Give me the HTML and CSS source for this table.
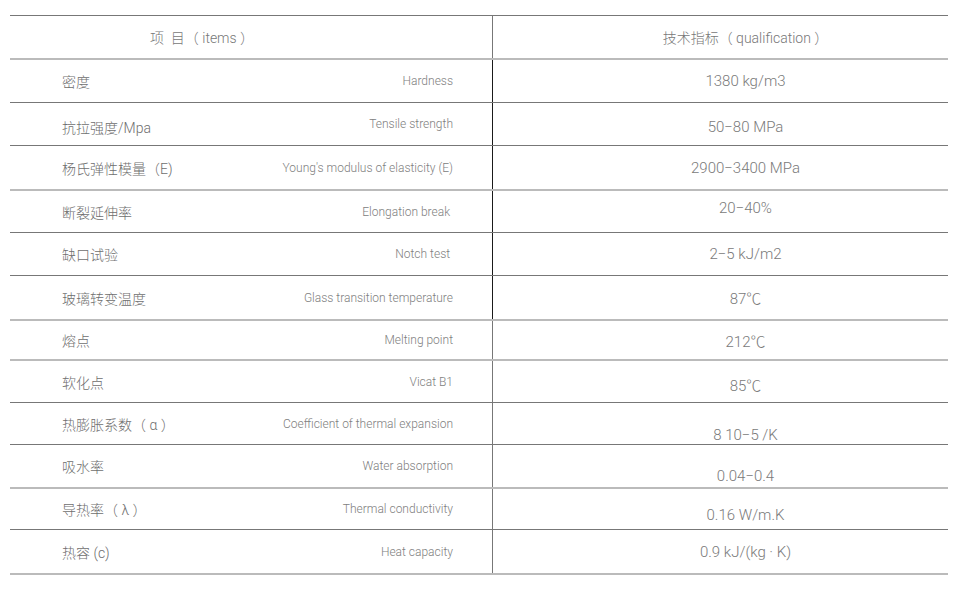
FILE: index.html
```html
<!DOCTYPE html>
<html lang="zh">
<head>
<meta charset="utf-8">
<link rel="stylesheet" href="styles.css">
</head>
<body>
<div class="table">
  <div class="row head h44 light">
    <div class="left gray"><span class="head-l">项&nbsp;&nbsp;目（ items ）</span></div>
    <div class="right"><span>技术指标（ qualification ）</span></div>
  </div>
  <div class="row h43 dark">
    <div class="left black"><span class="cn">密度</span><span class="en">Hardness</span></div>
    <div class="right"><span>1380 kg/m3</span></div>
  </div>
  <div class="row h43 dark">
    <div class="left black"><span class="cn d3">抗拉强度/Mpa</span><span class="en">Tensile strength</span></div>
    <div class="right"><span class="d3">50−80 MPa</span></div>
  </div>
  <div class="row h45 light">
    <div class="left black"><span class="cn">杨氏弹性模量（E)</span><span class="en">Young's modulus of elasticity (E)</span></div>
    <div class="right"><span>2900−3400 MPa</span></div>
  </div>
  <div class="row h42 dark">
    <div class="left black"><span class="cn">断裂延伸率</span><span class="en">Elongation break&nbsp;</span></div>
    <div class="right"><span class="u4">20−40%</span></div>
  </div>
  <div class="row h43 dark">
    <div class="left black"><span class="cn">缺口试验</span><span class="en">Notch test&nbsp;</span></div>
    <div class="right"><span>2−5 kJ/m2</span></div>
  </div>
  <div class="row h45 light">
    <div class="left black"><span class="cn">玻璃转变温度</span><span class="en">Glass transition temperature</span></div>
    <div class="right"><span>87℃</span></div>
  </div>
  <div class="row h40 light">
    <div class="left gray"><span class="cn">熔点</span><span class="en">Melting point</span></div>
    <div class="right"><span>212℃</span></div>
  </div>
  <div class="row h42 dark">
    <div class="left gray"><span class="cn">软化点</span><span class="en">Vicat B1</span></div>
    <div class="right"><span class="d3">85℃</span></div>
  </div>
  <div class="row h42 dark">
    <div class="left gray"><span class="cn">热膨胀系数（ α ）</span><span class="en">Coefficient of thermal expansion</span></div>
    <div class="right"><span class="d11">8 10−5 /K</span></div>
  </div>
  <div class="row h44 light">
    <div class="left gray"><span class="cn">吸水率</span><span class="en">Water absorption</span></div>
    <div class="right"><span class="d10">0.04−0.4</span></div>
  </div>
  <div class="row h41 dark">
    <div class="left gray"><span class="cn">导热率（ λ ）</span><span class="en">Thermal conductivity</span></div>
    <div class="right"><span class="d6">0.16 W/m.K</span></div>
  </div>
  <div class="row h45 light">
    <div class="left gray"><span class="cn">热容 (c)</span><span class="en">Heat capacity</span></div>
    <div class="right"><span>0.9 kJ/(kg · K)</span></div>
  </div>
</div>
</body>
</html>
```
FILE: styles.css
```css
html, body {
  margin: 0;
  padding: 0;
  background: #fff;
}
body {
  font-family: Roboto, "Noto Sans CJK SC", sans-serif;
  color: #7a7a7a;
}
.table {
  margin: 15px 0 0 10px;
  width: 938px;
  border-top: 1px solid #777;
}
.row {
  display: flex;
  box-sizing: border-box;
}
.row.dark { border-bottom: 1px solid #777; }
.row.light { border-bottom: 2px solid #bbb; }
.h40 { height: 40px; }
.h41 { height: 41px; }
.h42 { height: 42px; }
.h43 { height: 43px; }
.h44 { height: 44px; }
.h45 { height: 45px; }
.left {
  width: 483px;
  display: flex;
  align-items: center;
  justify-content: space-between;
  padding: 0 39px 0 52px;
  box-sizing: border-box;
  border-right: 1px solid #777;
}
.left.black { border-right-color: #1a1a1a; }
.left.gray { border-right-color: #777; }
.head .left { justify-content: flex-start; padding-left: 140px; }
.head-l, .head .right span {
  font-size: 14px;
  font-weight: 300;
  color: #777;
}
.cn {
  font-size: 14px;
  font-weight: 300;
  color: #6e6e6e;
}
.en {
  font-size: 12px;
  font-weight: 300;
  color: #808080;
}
.right {
  flex: 1;
  display: flex;
  align-items: center;
  justify-content: center;
  padding-left: 50px;
  font-size: 15px;
  font-weight: 300;
  color: #7a7a7a;
}
.d3 { position: relative; top: 3px; }
.d6 { position: relative; top: 6px; }
.d10 { position: relative; top: 10px; }
.d11 { position: relative; top: 11px; }
.u4 { position: relative; top: -4px; }
```
